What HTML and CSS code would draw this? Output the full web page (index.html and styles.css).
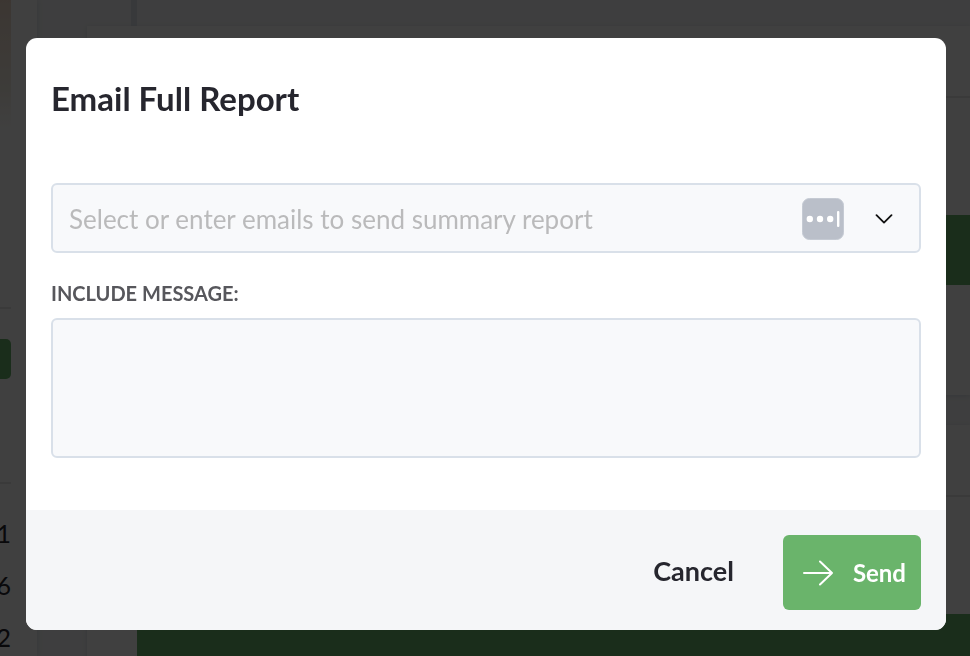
FILE: index.html
```html
<!DOCTYPE html>
<html lang="en">

<head>
    <meta charset="utf-8">
    <meta name="viewport" content="width=device-width, initial-scale=1">
    <title>Email Full Report</title>
    <link rel="stylesheet" href="styles.css">
</head>

<body>
    <div class="page" aria-hidden="true">
        <div class="sidebar">
            <div class="sidebar-photo"></div>
            <div class="sidebar-action"><span class="sidebar-button"></span></div>
            <div class="sidebar-stats">
                <span>1</span>
                <span>6</span>
                <span>2</span>
            </div>
        </div>
        <div class="content">
            <div class="timeline"></div>
            <div class="card">
                <div class="card-header"></div>
                <div class="card-body"></div>
                <div class="card-bar"></div>
            </div>
            <div class="card">
                <div class="card-header"></div>
                <div class="card-body"></div>
                <div class="card-bar"></div>
            </div>
        </div>
    </div>

    <div class="overlay">
        <form class="modal" role="dialog" aria-modal="true" aria-labelledby="modal-title">
            <div class="modal-body">
                <h1 class="modal-title" id="modal-title">Email Full Report</h1>

                <div class="combo">
                    <input class="combo-input" type="text" id="emails" name="emails" aria-label="Emails"
                        placeholder="Select or enter emails to send summary report">
                    <button class="combo-fill" type="button" aria-label="Autofill">
                        <svg width="42" height="42" viewBox="0 0 42 42">
                            <rect x="0.5" y="0.5" width="41" height="41" rx="7" fill="#babfc9" stroke="#c5cad3" />
                            <circle cx="7.8" cy="21" r="3.2" fill="#fff" />
                            <circle cx="18" cy="21" r="3.2" fill="#fff" />
                            <circle cx="28.2" cy="21" r="3.2" fill="#fff" />
                            <rect x="35" y="13" width="2.4" height="16" rx="1" fill="#fff" />
                        </svg>
                    </button>
                    <button class="combo-toggle" type="button" aria-label="Show emails">
                        <svg width="18" height="10" viewBox="0 0 18 10" fill="none" stroke="#111" stroke-width="1.8"
                            stroke-linecap="round" stroke-linejoin="round">
                            <path d="M1.5 1.2 L9 8.6 L16.5 1.2" />
                        </svg>
                    </button>
                </div>

                <label class="message-label" for="message">INCLUDE MESSAGE:</label>
                <textarea class="message" id="message" name="message"></textarea>
            </div>

            <div class="modal-footer">
                <button class="cancel" type="button">Cancel</button>
                <button class="send" type="submit">
                    <svg width="30" height="26" viewBox="0 0 30 26" fill="none" stroke="#fff" stroke-width="2"
                        stroke-linecap="round" stroke-linejoin="round">
                        <path d="M1 13 H29 M17 1.5 L29 13 L17 24.5" />
                    </svg>
                    Send
                </button>
            </div>
        </form>
    </div>
</body>

</html>
```

FILE: styles.css
```css
* {
    box-sizing: border-box;
}

body {
    margin: 0;
    font-family: Lato, "Liberation Sans", sans-serif;
    color: #26262e;
}

button,
input,
textarea {
    font-family: inherit;
}

button {
    padding: 0;
    border: none;
    background: none;
    cursor: pointer;
}

svg {
    display: block;
}

/* Report page behind the dialog */
.page {
    display: flex;
    height: 100vh;
    overflow: hidden;
    background-color: #f7f8f9;
}

.sidebar {
    flex: none;
    width: 37px;
    padding-right: 26px;
    background-color: #fff;
    box-shadow: 0 0 6px #d5dbe3;
}

.sidebar-photo {
    height: 130px;
    margin-bottom: 177px;
    background: linear-gradient(#eed8c8, #f4eee4 70%, #fff);
}

.sidebar-action {
    height: 177px;
    padding-top: 30px;
    border-top: 2px solid #e6e6e6;
    border-bottom: 2px solid #e6e6e6;
}

.sidebar-button {
    display: block;
    height: 40px;
    border-radius: 0 5px 5px 0;
    background-color: #6ab46b;
}

.sidebar-stats {
    display: flex;
    flex-direction: column;
    align-items: flex-end;
    padding-top: 23px;
    font-size: 25px;
    line-height: 52px;
}

.content {
    flex: 1;
    padding-left: 50px;
}

.timeline {
    width: 50px;
    height: 26px;
    border-right: 6px solid #dde2ea;
}

.card {
    margin-bottom: 30px;
    background-color: #fff;
    box-shadow: 0 1px 5px #d5dbe3;
}

.card-header {
    height: 72px;
    border-bottom: 2px solid #e6e6e6;
}

.card-body {
    height: 117px;
}

.card-bar {
    height: 70px;
    margin-left: 50px;
    background-color: #6ab46b;
}

.card::after {
    content: "";
    display: block;
    height: 110px;
}

/* Dialog */
.overlay {
    position: fixed;
    inset: 0;
    padding: 38px 24px 26px 26px;
    background-color: rgba(0, 0, 0, 0.75);
}

.modal {
    overflow: hidden;
    border-radius: 11px;
    background-color: #fff;
}

.modal-body {
    padding: 40px 25px 52px;
}

.modal-title {
    margin: 0 0 65px;
    font-size: 33px;
    line-height: 40px;
    font-weight: 700;
}

.combo {
    display: flex;
    align-items: center;
    height: 70px;
    padding: 2px 26px 0 16px;
    border: 2px solid #d9e0e9;
    border-radius: 6px;
    background-color: #f8f9fb;
}

.combo-input {
    flex: 1;
    min-width: 0;
    padding: 0;
    border: none;
    background: none;
    font-size: 26px;
    line-height: 32px;
    color: inherit;
}

.combo-input::placeholder {
    color: #bababb;
}

.combo-fill {
    margin-right: 31px;
}

.message-label {
    display: block;
    padding: 28px 0 13px;
    font-size: 20px;
    line-height: 24px;
    font-weight: 700;
    color: #57575c;
}

.message {
    display: block;
    width: 100%;
    height: 140px;
    padding: 16px;
    border: 2px solid #d9e0e9;
    border-radius: 6px;
    background-color: #f8f9fb;
    font-size: 26px;
    resize: none;
}

.modal-footer {
    display: flex;
    justify-content: flex-end;
    align-items: center;
    gap: 49px;
    padding: 25px 25px 20px;
    background-color: #f5f6f8;
}

.cancel {
    padding-bottom: 4px;
    font-size: 27px;
    line-height: 32px;
    font-weight: 700;
    color: #26262e;
}

.send {
    display: flex;
    align-items: center;
    gap: 20px;
    height: 75px;
    padding: 0 15px 0 20px;
    border-radius: 6px;
    background-color: #6ab46b;
    font-size: 24px;
    font-weight: 700;
    color: #fff;
}
```
